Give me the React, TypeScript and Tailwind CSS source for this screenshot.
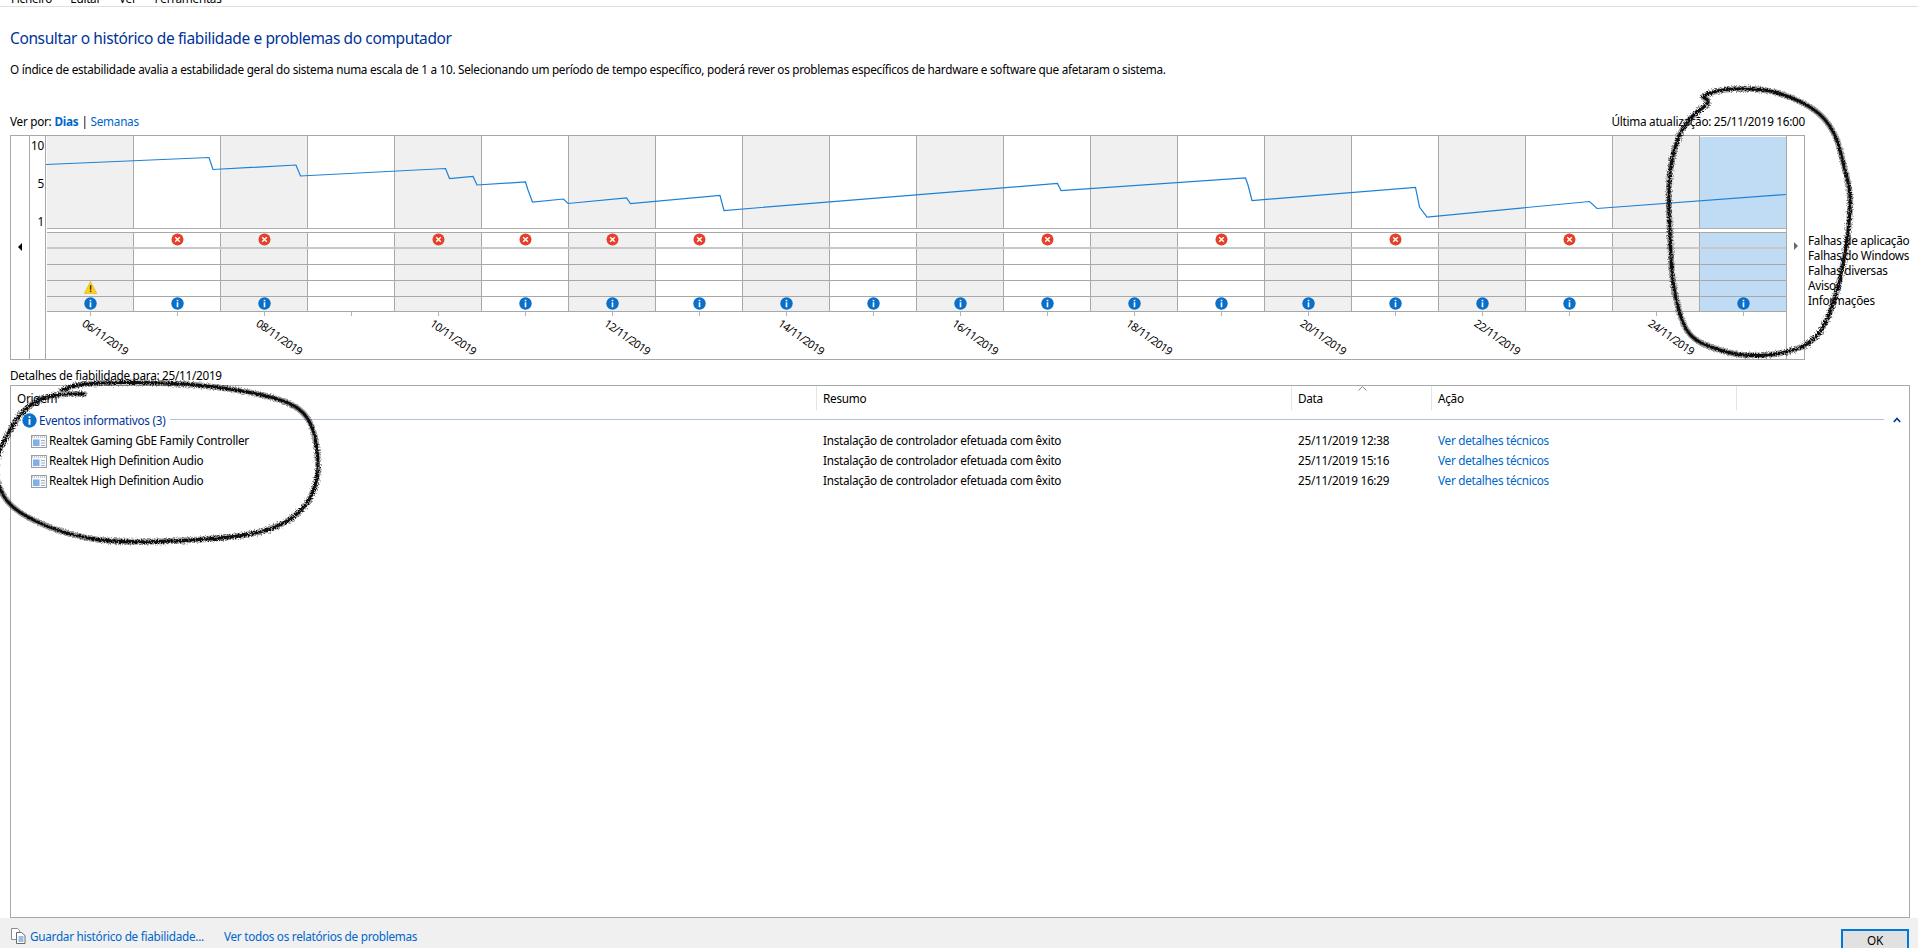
const errors = [1, 2, 4, 5, 6, 7, 11, 13, 15, 17];
const infos = [0, 1, 2, 5, 6, 7, 8, 9, 10, 11, 12, 13, 14, 15, 16, 17, 19];
const days = Array.from({ length: 20 }, (_, i) => i);
const legend = ['Falhas de aplicação', 'Falhas do Windows', 'Falhas diversas', 'Avisos', 'Informações'];
const rows = [
  ['Realtek Gaming GbE Family Controller', '25/11/2019 12:38'],
  ['Realtek High Definition Audio', '25/11/2019 15:16'],
  ['Realtek High Definition Audio', '25/11/2019 16:29'],
];

// stability line, in page coordinates
const line = [
  [46, 164.5], [209, 157.5], [213, 169.5], [296, 165], [300.5, 176], [445.5, 168.5], [449.5, 178.5], [473, 176.5],
  [477, 185], [525.5, 182], [528, 190], [532.5, 202], [563.5, 199], [568, 203.5], [626.5, 198], [630.5, 203.5],
  [720, 195.5], [724, 210.5], [1057.5, 183.5], [1061, 190.5], [1245.5, 178], [1248, 185], [1252, 200.5],
  [1415.5, 187.5], [1419.5, 207], [1427, 217], [1589.5, 201.5], [1597, 208.5], [1786, 194.5],
];

const scribbleRight = [
  [1703, 97], [1711, 90], [1760, 88], [1792, 97], [1821, 113], [1837, 137], [1843, 163], [1851, 193], [1849, 227],
  [1843, 267], [1833, 307], [1817, 340], [1788, 353], [1747, 357], [1711, 348], [1690, 337], [1680, 317], [1672, 280],
  [1670, 237], [1668, 180], [1676, 140], [1690, 117], [1711, 102], [1703, 97],
];
const scribbleLeft = [
  [84, 394], [53, 393], [25, 407], [8, 433], [-4, 457], [-4, 483], [12, 510], [61, 533], [114, 543], [204, 540],
  [265, 533], [302, 513], [318, 483], [318, 450], [310, 417], [286, 400], [229, 388], [163, 382], [82, 383], [62, 390],
];

function smooth(pts: number[][]) {
  let d = `M${pts[0][0]} ${pts[0][1]}`;
  for (let i = 1; i < pts.length - 1; i++) {
    const mx = (pts[i][0] + pts[i + 1][0]) / 2;
    const my = (pts[i][1] + pts[i + 1][1]) / 2;
    d += ` Q${pts[i][0]} ${pts[i][1]} ${mx} ${my}`;
  }
  const last = pts[pts.length - 1];
  return d + ` L${last[0]} ${last[1]}`;
}

function ErrorIcon() {
  return (
    <svg width="13" height="13" viewBox="0 0 13 13" className="block">
      <circle cx="6.500" cy="6.500" r="6" fill="#e5402a" />
      <path d="M4.200 4.200l4.600 4.600M8.800 4.200l-4.600 4.600" stroke="#fff" strokeWidth="1.400" fill="none" />
    </svg>
  );
}

function InfoIcon({ size = 13 }: { size?: number }) {
  return (
    <svg width={size} height={size} viewBox="0 0 13 13" className="block">
      <circle cx="6.500" cy="6.500" r="6.200" fill="#0a6fc9" />
      <rect x="5.700" y="5.300" width="1.600" height="4.900" fill="#fff" />
      <rect x="5.700" y="2.800" width="1.600" height="1.500" fill="#fff" />
    </svg>
  );
}

function WarnIcon() {
  return (
    <svg width="13" height="13" viewBox="0 0 13 13" className="block">
      <path d="M6.500 .5L12.800 12.500H.2Z" fill="#fdd118" stroke="#d9a800" strokeWidth=".5" />
      <rect x="5.900" y="4.200" width="1.400" height="4.600" fill="#3a3000" />
      <rect x="5.900" y="9.600" width="1.400" height="1.500" fill="#3a3000" />
    </svg>
  );
}

function AppIcon() {
  return (
    <svg width="16" height="13" viewBox="0 0 16 13" className="block shrink-0">
      <rect x=".5" y=".5" width="15" height="12" fill="#f6f8fb" stroke="#9a9ea5" />
      <path d="M1 2h14" stroke="#c4c9d1" strokeWidth="2" fill="none" strokeDasharray="1 1" />
      <rect x="2" y="4.500" width="6.500" height="6.500" fill="#7fb0e6" />
      <path d="M10 5.500h4M10 8h4M10 10.500h4" stroke="#a3b0c0" fill="none" />
    </svg>
  );
}

function PagesIcon() {
  return (
    <svg width="15" height="16" viewBox="0 0 15 16" className="block shrink-0">
      <path d="M.5.5h6l2 2v9h-8z" fill="#fff" stroke="#8a8a8a" />
      <path d="M5.500 4.500h5l3.500 3v8h-8.500z" fill="#fff" stroke="#6a6a6a" />
      <path d="M7.500 9h5M7.500 11h5M7.500 13h5" stroke="#2f7fd0" fill="none" />
    </svg>
  );
}

export default function App() {
  return (
    <div className="relative flex h-[948px] flex-col overflow-hidden bg-white font-['Noto_Sans',sans-serif] text-[11.75px] tracking-[-0.28px] text-black">
      {/* Menu, cut off by the top of the capture */}
      <div className="flex h-[7px] shrink-0 gap-[18px] overflow-hidden border-b border-[#e0e0e0] pl-[11px]">
        {['Ficheiro', 'Editar', 'Ver', 'Ferramentas'].map((m) => (
          <span key={m} className="-mt-[10px] leading-[16px]">{m}</span>
        ))}
      </div>

      <div className="flex min-h-0 flex-1 flex-col pl-[10px] pr-[8px]">
        <h1 className="mt-[20px] h-[22px] text-[15.5px] font-normal leading-[22px] tracking-[-0.38px] text-[#003399]">
          Consultar o histórico de fiabilidade e problemas do computador
        </h1>
        <p className="mt-[12px] h-[16px] leading-[16px]">
          O índice de estabilidade avalia a estabilidade geral do sistema numa escala de 1 a 10. Selecionando um período de tempo específico, poderá rever os problemas específicos de hardware e software que afetaram o sistema.
        </p>

        <div className="mt-[36px] flex h-[16px] w-[1795px] justify-between leading-[16px]">
          <div className="flex gap-[3px]">
            <span>Ver por:</span>
            <b className="font-bold text-[#0066cc]">Dias</b>
            <span>|</span>
            <span className="text-[#0066cc]">Semanas</span>
          </div>
          <div>Última atualização: 25/11/2019 16:00</div>
        </div>

        <div className="mt-[6px] flex items-start">
          {/* Chart box */}
          <div className="flex h-[225px] w-[1795px] shrink-0 border border-[#a8a8a8]">
            <div className="flex w-[19px] shrink-0 justify-center border-r border-[#a8a8a8] pt-[107px] pr-[1px]">
              <svg width="4" height="8" viewBox="0 0 4 8" className="block"><path d="M4 0v8L0 4z" fill="#000" /></svg>
            </div>
            <div className="flex w-[16px] shrink-0 flex-col items-end border-r border-[#a8a8a8] pr-[1px] leading-[16px]">
              <span className="mt-[1px]">10</span>
              <span className="mt-[22px]">5</span>
              <span className="mt-[22px]">1</span>
            </div>

            <div className="w-[1741px] shrink-0 border-r border-[#a8a8a8] pl-px">
              {/* Stability chart */}
              <div className="relative grid h-[93px] grid-cols-[repeat(19,87px)_86px] border-b border-[#b0b0b0]">
                {days.map((d) => (
                  <div
                    key={d}
                    className={
                      d === 19
                        ? 'border-t border-white bg-[#bfdcf4]'
                        : d % 2 === 0
                          ? 'border-r border-[#a8a8a8] bg-[#f0f0f0]'
                          : 'border-r border-[#a8a8a8] bg-white'
                    }
                  />
                ))}
                <svg width="1741" height="92" className="absolute -left-px top-0 block">
                  <polyline
                    points={line.map(([x, y]) => `${x - 46},${y - 136}`).join(' ')}
                    fill="none"
                    stroke="#1b80d8"
                    strokeWidth="1.200"
                  />
                </svg>
              </div>

              {/* Event rows */}
              <div className="mt-[3px] border-t border-[#a8a8a8]">
                {[0, 1, 2, 3, 4].map((r) => (
                  <div
                    key={r}
                    className={`grid grid-cols-[repeat(19,87px)_86px] ${
                      r === 0 ? 'h-[16px] border-b-2 border-[#c8c8c8]' : r === 4 ? 'h-[15px] border-b border-[#a8a8a8]' : 'h-[16px] border-b border-[#a8a8a8]'
                    }`}
                  >
                    {days.map((d) => (
                      <div
                        key={d}
                        className={`flex justify-center ${
                          d === 19 ? 'bg-[#bfdcf4]' : d % 2 === 0 ? 'border-r border-[#a8a8a8] bg-[#f0f0f0]' : 'border-r border-[#a8a8a8] bg-white'
                        }`}
                      >
                        {r === 0 && errors.includes(d) && <ErrorIcon />}
                        {r === 3 && d === 0 && <WarnIcon />}
                        {r === 4 && infos.includes(d) && <InfoIcon />}
                      </div>
                    ))}
                  </div>
                ))}
              </div>

              {/* Date axis */}
              <div className="grid h-[48px] grid-cols-[repeat(19,87px)_86px]">
                {days.map((d) => (
                  <div key={d} className="flex flex-col items-center">
                    <span className="h-[4px] w-px bg-[#b4b4b4]" />
                    {d % 2 === 0 && d < 19 && (
                      <span className="mt-px ml-[44px] w-[52px] origin-top-left rotate-[35deg] whitespace-nowrap text-[11px] leading-[12px] tracking-[-0.55px]">
                        {`${String(d + 6).padStart(2, '0')}/11/2019`}
                      </span>
                    )}
                  </div>
                ))}
              </div>
            </div>

            <div className="flex flex-1 justify-center pt-[106px]">
              <svg width="4" height="8" viewBox="0 0 4 8" className="block"><path d="M0 0v8l4-4z" fill="#6a6a6a" /></svg>
            </div>
          </div>

          <ul className="ml-[3px] whitespace-nowrap pt-[98px] leading-[15px]">
            {legend.map((l) => <li key={l}>{l}</li>)}
          </ul>
        </div>

        <div className="mt-[7px] h-[16px] leading-[16px]">Detalhes de fiabilidade para: 25/11/2019</div>

        {/* Details table */}
        <div className="mt-[2px] min-h-0 flex-1 border border-[#a8a8a8]">
          <div className="grid h-[24px] grid-cols-[806px_475px_140px_305px_1fr] leading-[24px]">
            <div className="border-r border-[#e5e5e5] pl-[6px]">Origem</div>
            <div className="border-r border-[#e5e5e5] pl-[6px]">Resumo</div>
            <div className="relative border-r border-[#e5e5e5] pl-[6px]">
              Data
              <svg width="9" height="5" viewBox="0 0 9 5" className="absolute left-[66px] top-0 block">
                <path d="M.5 4.500l4-4 4 4" fill="none" stroke="#8a8a8a" />
              </svg>
            </div>
            <div className="border-r border-[#e5e5e5] pl-[6px]">Ação</div>
            <div />
          </div>

          <div className="flex h-[21px] items-center pl-[11px] pr-[8px]">
            <InfoIcon size={15} />
            <span className="ml-[2px] text-[#003399]">Eventos informativos (3)</span>
            <span className="mb-[2px] ml-[5px] h-px flex-1 bg-[#b4c0dc]" />
            <svg width="8" height="6" viewBox="0 0 8 6" className="mb-[2px] ml-[9px] block">
              <path d="M.8 5L4 1.500 7.200 5" fill="none" stroke="#003399" strokeWidth="1.600" />
            </svg>
          </div>

          {rows.map(([name, date], i) => (
            <div key={i} className="grid h-[20px] grid-cols-[806px_475px_140px_305px_1fr] items-center">
              <div className="flex items-center gap-[2px] pl-[20px]">
                <AppIcon />
                {name}
              </div>
              <div className="pl-[6px]">Instalação de controlador efetuada com êxito</div>
              <div className="pl-[6px]">{date}</div>
              <div className="pl-[6px] text-[#0066cc]">Ver detalhes técnicos</div>
            </div>
          ))}
        </div>
      </div>

      {/* Footer */}
      <div className="flex h-[30px] shrink-0 items-start bg-[#f0f0f0] pl-[11px] pr-[9px]">
        <div className="mt-[10px]"><PagesIcon /></div>
        <span className="mt-[10px] ml-[4px] leading-[16px] text-[#0066cc]">Guardar histórico de fiabilidade...</span>
        <span className="mt-[10px] ml-[20px] leading-[16px] text-[#0066cc]">Ver todos os relatórios de problemas</span>
        <button className="mt-[11px] ml-auto h-[23px] w-[68px] shrink-0 border-2 border-[#0078d7] bg-[#e1e1e1] leading-[17px]">OK</button>
      </div>

      {/* Hand-drawn marks over the capture */}
      <svg width="1918" height="948" className="pointer-events-none absolute left-0 top-0 block">
        <defs>
          <filter id="rough" x="-5%" y="-5%" width="110%" height="110%">
            <feTurbulence type="fractalNoise" baseFrequency="0.7" numOctaves="2" seed="4" />
            <feDisplacementMap in="SourceGraphic" scale="5" />
          </filter>
        </defs>
        <g fill="none" strokeLinecap="round" strokeLinejoin="round" filter="url(#rough)">
          <path d={smooth(scribbleRight)} stroke="#000" strokeOpacity=".4" strokeWidth="6" />
          <path d={smooth(scribbleLeft)} stroke="#000" strokeOpacity=".4" strokeWidth="6" />
          <path d={smooth(scribbleRight)} stroke="#111" strokeWidth="3" />
          <path d={smooth(scribbleLeft)} stroke="#111" strokeWidth="3" />
        </g>
      </svg>
    </div>
  );
}
